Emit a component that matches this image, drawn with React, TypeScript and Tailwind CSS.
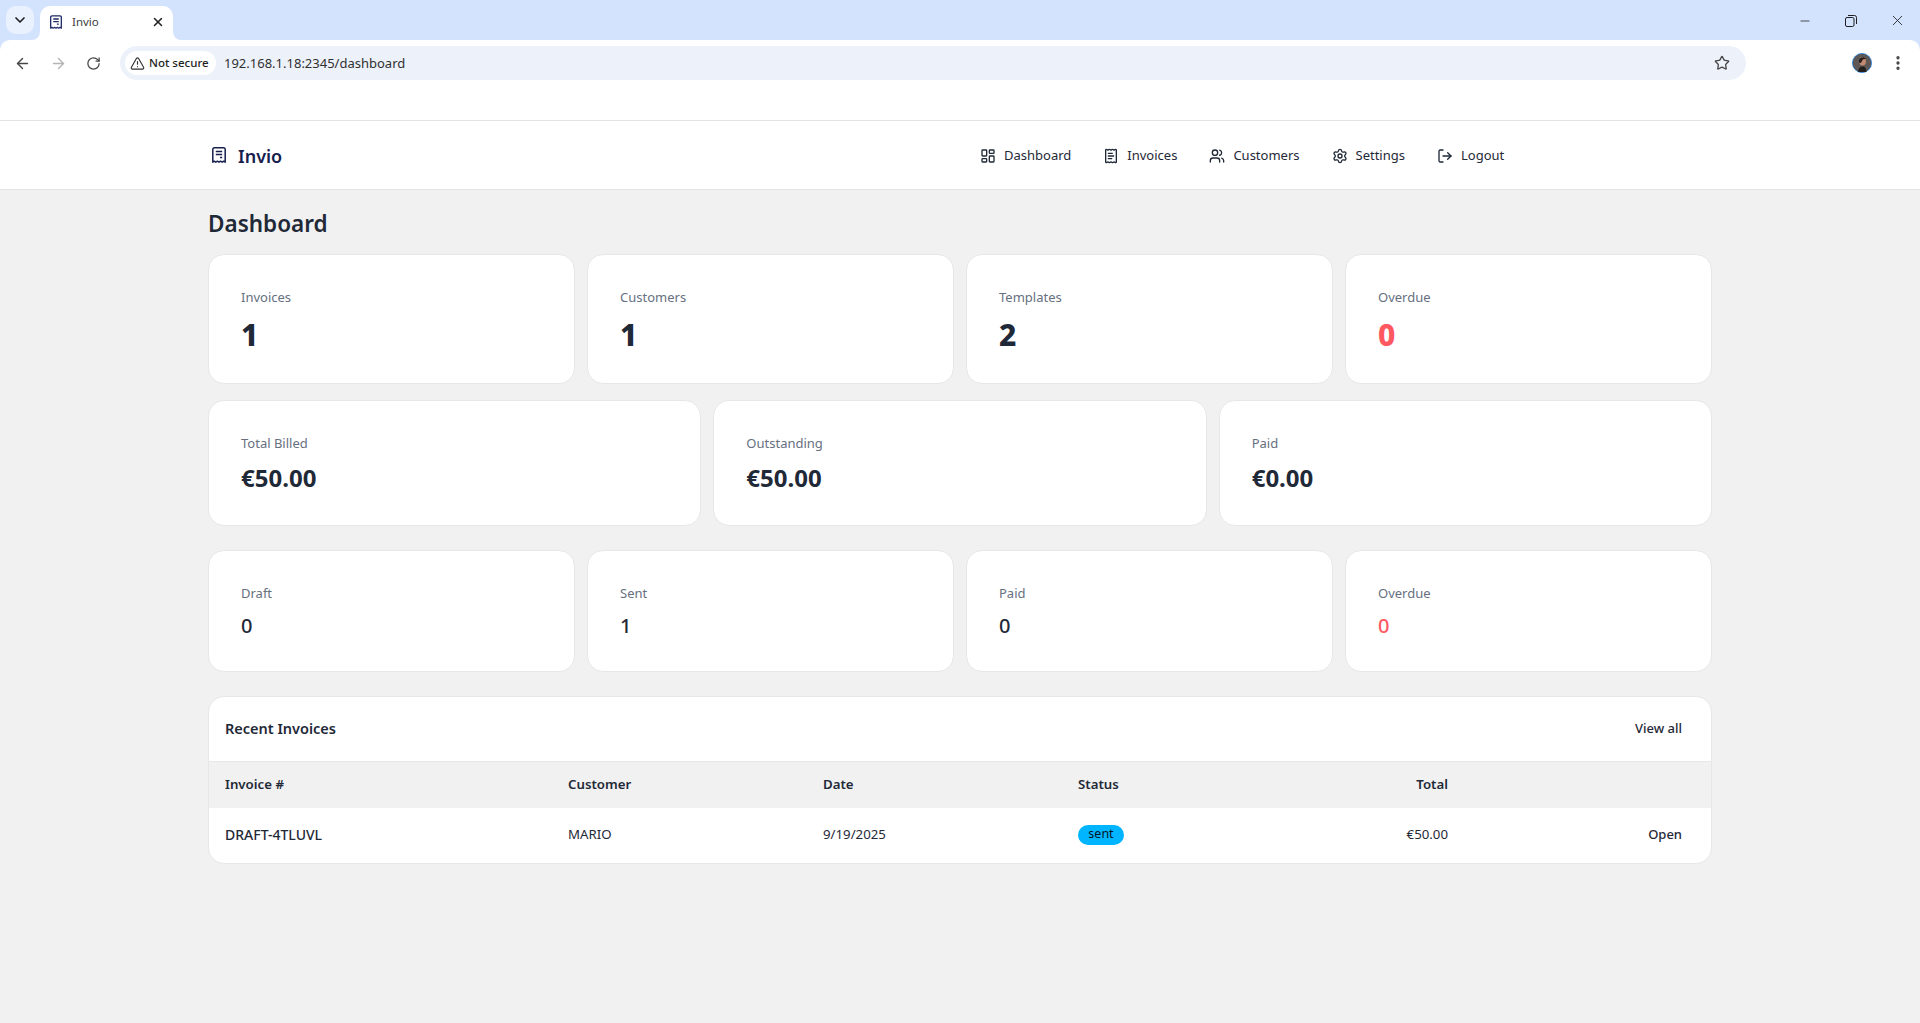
import React from "react";
import {
  ArrowLeft,
  ArrowRight,
  ChevronDown,
  EllipsisVertical,
  LayoutDashboard,
  LogOut,
  Minus,
  ReceiptText,
  RotateCw,
  Settings,
  Star,
  TriangleAlert,
  Users,
  X,
} from "lucide-react";

const navLinks = [
  { label: "Dashboard", icon: LayoutDashboard },
  { label: "Invoices", icon: ReceiptText },
  { label: "Customers", icon: Users },
  { label: "Settings", icon: Settings },
  { label: "Logout", icon: LogOut },
];

const topStats = [
  { label: "Invoices", value: "1" },
  { label: "Customers", value: "1" },
  { label: "Templates", value: "2" },
  { label: "Overdue", value: "0", danger: true },
];

const moneyStats = [
  { label: "Total Billed", value: "€50.00" },
  { label: "Outstanding", value: "€50.00" },
  { label: "Paid", value: "€0.00" },
];

const statusStats = [
  { label: "Draft", value: "0" },
  { label: "Sent", value: "1" },
  { label: "Paid", value: "0" },
  { label: "Overdue", value: "0", danger: true },
];

// square receipt used for the favicon and the logo, flat top and torn bottom
const ReceiptLogo = ({ className }: { className: string }) => (
  <svg className={className} viewBox="0 0 14 16" fill="none" stroke="currentColor" strokeWidth="1.5">
    <path d="M.8 15.200V2.300A1.500 1.500 0 0 1 2.300.8h9.400a1.500 1.500 0 0 1 1.500 1.500v12.900l-1.500-1-1.500 1-1.600-1-1.600 1-1.600-1-1.600 1-1.500-1z" strokeLinejoin="round" />
    <path d="M3.800 4.500h6.400M3.800 7.500h6.400M8 10.500h2.200" />
  </svg>
);

const BrowserChrome = () => (
  <div className="bg-[#d3e3fd]">
    {/* tab strip */}
    <div className="flex h-10 items-end pl-[6px]">
      <div className="mb-[6px] flex h-7 w-7 items-center justify-center rounded-[10px] bg-[#e9f1fe]">
        <ChevronDown className="h-4 w-4 text-[#1f1f1f]" strokeWidth={2.5} />
      </div>
      <div className="relative ml-[6px] flex h-[34px] w-[133px] items-center rounded-t-[10px] bg-white pb-[3px] pl-[10px] pr-[8px]">
        <ReceiptLogo className="h-[14px] w-[12px] text-[#1e2a66]" />
        <span className="ml-[10px] flex-1 text-[11.5px] text-[#3c4043]">Invio</span>
        <X className="h-[14px] w-[14px] text-[#1f1f1f]" strokeWidth={2.5} />
        <svg className="absolute bottom-0 left-[-8px] h-2 w-2" viewBox="0 0 8 8">
          <path d="M8 0v8H0a8 8 0 0 0 8-8z" fill="#fff" />
        </svg>
        <svg className="absolute bottom-0 right-[-8px] h-2 w-2" viewBox="0 0 8 8">
          <path d="M0 0v8h8a8 8 0 0 1-8-8z" fill="#fff" />
        </svg>
      </div>
      <div className="flex-1" />
      <div className="mb-[11px] flex items-center text-[#1f1f1f]">
        <Minus className="mr-[33px] h-[14px] w-[14px]" strokeWidth={1.3} />
        <svg className="mr-[32px] h-[12px] w-[12px]" viewBox="0 0 12 12" fill="none" stroke="currentColor">
          <rect x="0.5" y="2.5" width="8.5" height="9" rx="1.5" />
          <path d="M3 .5h6.500a2 2 0 0 1 2 2V9" />
        </svg>
        <X className="mr-[14px] h-[17px] w-[17px]" strokeWidth={1.2} />
      </div>
    </div>
    {/* toolbar */}
    <div className="flex h-[41px] items-center rounded-t-[10px] bg-white pt-[5px]">
      <div className="flex w-[120px] items-center pl-[14px] text-[#474747]">
        <ArrowLeft className="h-[17px] w-[17px]" strokeWidth={2} />
        <ArrowRight className="ml-[19px] h-[17px] w-[17px] text-[#b5b5b5]" strokeWidth={2} />
        <RotateCw className="ml-[19px] h-[15px] w-[15px]" strokeWidth={2} />
      </div>
      <div className="flex h-[34px] w-[1626px] items-center rounded-full bg-[#edf2fa] pl-[5px] pr-[16px]">
        <div className="flex h-6 w-[91px] items-center rounded-full bg-white pl-[5px]">
          <TriangleAlert className="h-[15px] w-[15px] text-[#303030]" strokeWidth={1.8} />
          <span className="ml-[4px] text-[11.5px] font-medium text-[#1f1f1f]">Not secure</span>
        </div>
        <span className="ml-[8px] mt-[2px] flex-1 text-[13px] text-[#303030]">192.168.1.18:2345/dashboard</span>
        <Star className="h-4 w-4 text-[#474747]" strokeWidth={2} />
      </div>
      <div className="ml-[106px] flex h-5 w-5 items-center justify-center rounded-full border border-[#3b8be0] bg-[#4a4a4a]">
        <svg className="h-[18px] w-[18px]" viewBox="0 0 16 16">
          <circle cx="8" cy="8" r="8" fill="#5d5855" />
          <ellipse cx="8.500" cy="6.500" rx="3" ry="3.800" fill="#c48b70" />
          <path d="M5.200 6c0-3 5-4.200 6.300-1.600L9 4.600 7 8 5.600 8z" fill="#262120" />
          <path d="M4.500 16c.4-4 2-5 4-5s3 1 3.500 5z" fill="#231f1e" />
        </svg>
      </div>
      <EllipsisVertical className="ml-[17px] h-[18px] w-[18px] text-[#474747]" strokeWidth={2.4} />
    </div>
    <div className="h-[39px] bg-white" />
  </div>
);

const NavBar = () => (
  <header className="h-[70px] border-y border-[#e3e3e3] bg-white">
    <div className="mx-auto flex h-full w-[1504px] items-center">
      <div className="flex w-[752px] items-center pl-[4px]">
        <ReceiptLogo className="h-4 w-[14px] text-[#17204d]" />
        <span className="ml-[12px] mt-[2px] text-[18px] font-semibold text-[#17204d]">Invio</span>
      </div>
      <nav className="mt-[2px] flex items-center pl-[20px]">
        {navLinks.map(({ label, icon: Icon }) => (
          <a key={label} className="mr-[32px] flex items-center gap-[8px] text-[13px] text-[#1f2937]">
            <Icon className="h-4 w-4" />
            {label}
          </a>
        ))}
      </nav>
    </div>
  </header>
);

type Stat = { label: string; value: string; danger?: boolean };

const StatCard = ({ stat, sizeClass, valueClass }: { stat: Stat; sizeClass: string; valueClass: string }) => (
  <div className={`${sizeClass} rounded-2xl border border-[#e7e7e7] bg-white px-8 pt-8`}>
    <div className="text-[13px] leading-5 text-[#667080]">{stat.label}</div>
    <div className={`${valueClass} ${stat.danger ? "text-[#ff5861]" : "text-[#1f2937]"}`}>{stat.value}</div>
  </div>
);

const RecentInvoices = () => (
  <div className="mt-6 overflow-hidden rounded-2xl border border-[#e7e7e7] bg-white">
    <div className="flex h-[64px] items-center justify-between pl-4 pr-[29px]">
      <h2 className="text-[14.5px] font-semibold text-[#1f2937]">Recent Invoices</h2>
      <a className="text-[13px] font-medium text-[#1f2937]">View all</a>
    </div>
    <table className="w-full table-fixed text-left text-[13.25px] text-[#1f2937]">
      <thead className="border-t border-[#e7e7e7] bg-[#f1f1f2]">
        <tr className="h-[46px]">
          <th className="w-[343px] pl-4 font-semibold">Invoice #</th>
          <th className="w-[255px] pl-4 font-semibold">Customer</th>
          <th className="w-[255px] pl-4 font-semibold">Date</th>
          <th className="w-[255px] pl-4 font-semibold">Status</th>
          <th className="w-[147px] pr-4 text-right font-semibold">Total</th>
          <th />
        </tr>
      </thead>
      <tbody>
        <tr className="h-[55px]">
          <td className="pb-[1px] pl-4 text-[14px] font-medium">DRAFT-4TLUVL</td>
          <td className="pb-[1px] pl-4">MARIO</td>
          <td className="pb-[1px] pl-4">9/19/2025</td>
          <td className="pb-[1px] pl-4">
            <span className="inline-flex h-5 w-[46px] items-center justify-center rounded-full bg-[#00b5ff] text-[12.5px] text-[#00141d]">
              sent
            </span>
          </td>
          <td className="pb-[1px] pr-4 text-right">€50.00</td>
          <td className="pb-[1px] pr-[29px] text-right text-[13px] font-medium">Open</td>
        </tr>
      </tbody>
    </table>
  </div>
);

const App = () => {
  return (
    <div className="flex h-[1023px] flex-col overflow-hidden bg-[#f1f1f1] font-['Noto_Sans',sans-serif]">
      <BrowserChrome />
      <NavBar />
      <main className="mx-auto w-[1504px]">
        <h1 className="mb-[14px] mt-[18px] text-[22.5px] font-semibold leading-8 text-[#1f2937]">Dashboard</h1>
        <div className="grid grid-cols-4 gap-3">
          {topStats.map((stat) => (
            <StatCard key={stat.label} stat={stat} sizeClass="h-[130px]" valueClass="mt-2 text-[30px] font-extrabold leading-10" />
          ))}
        </div>
        <div className="mt-4 grid grid-cols-3 gap-3">
          {moneyStats.map((stat) => (
            <StatCard key={stat.label} stat={stat} sizeClass="h-[126px]" valueClass="mt-[7px] text-[24px] font-bold leading-9" />
          ))}
        </div>
        <div className="mt-6 grid grid-cols-4 gap-3">
          {statusStats.map((stat) => (
            <StatCard key={stat.label} stat={stat} sizeClass="h-[122px]" valueClass="mt-[7px] text-[20px] font-medium leading-8" />
          ))}
        </div>
        <RecentInvoices />
      </main>
    </div>
  );
};

export default App;
